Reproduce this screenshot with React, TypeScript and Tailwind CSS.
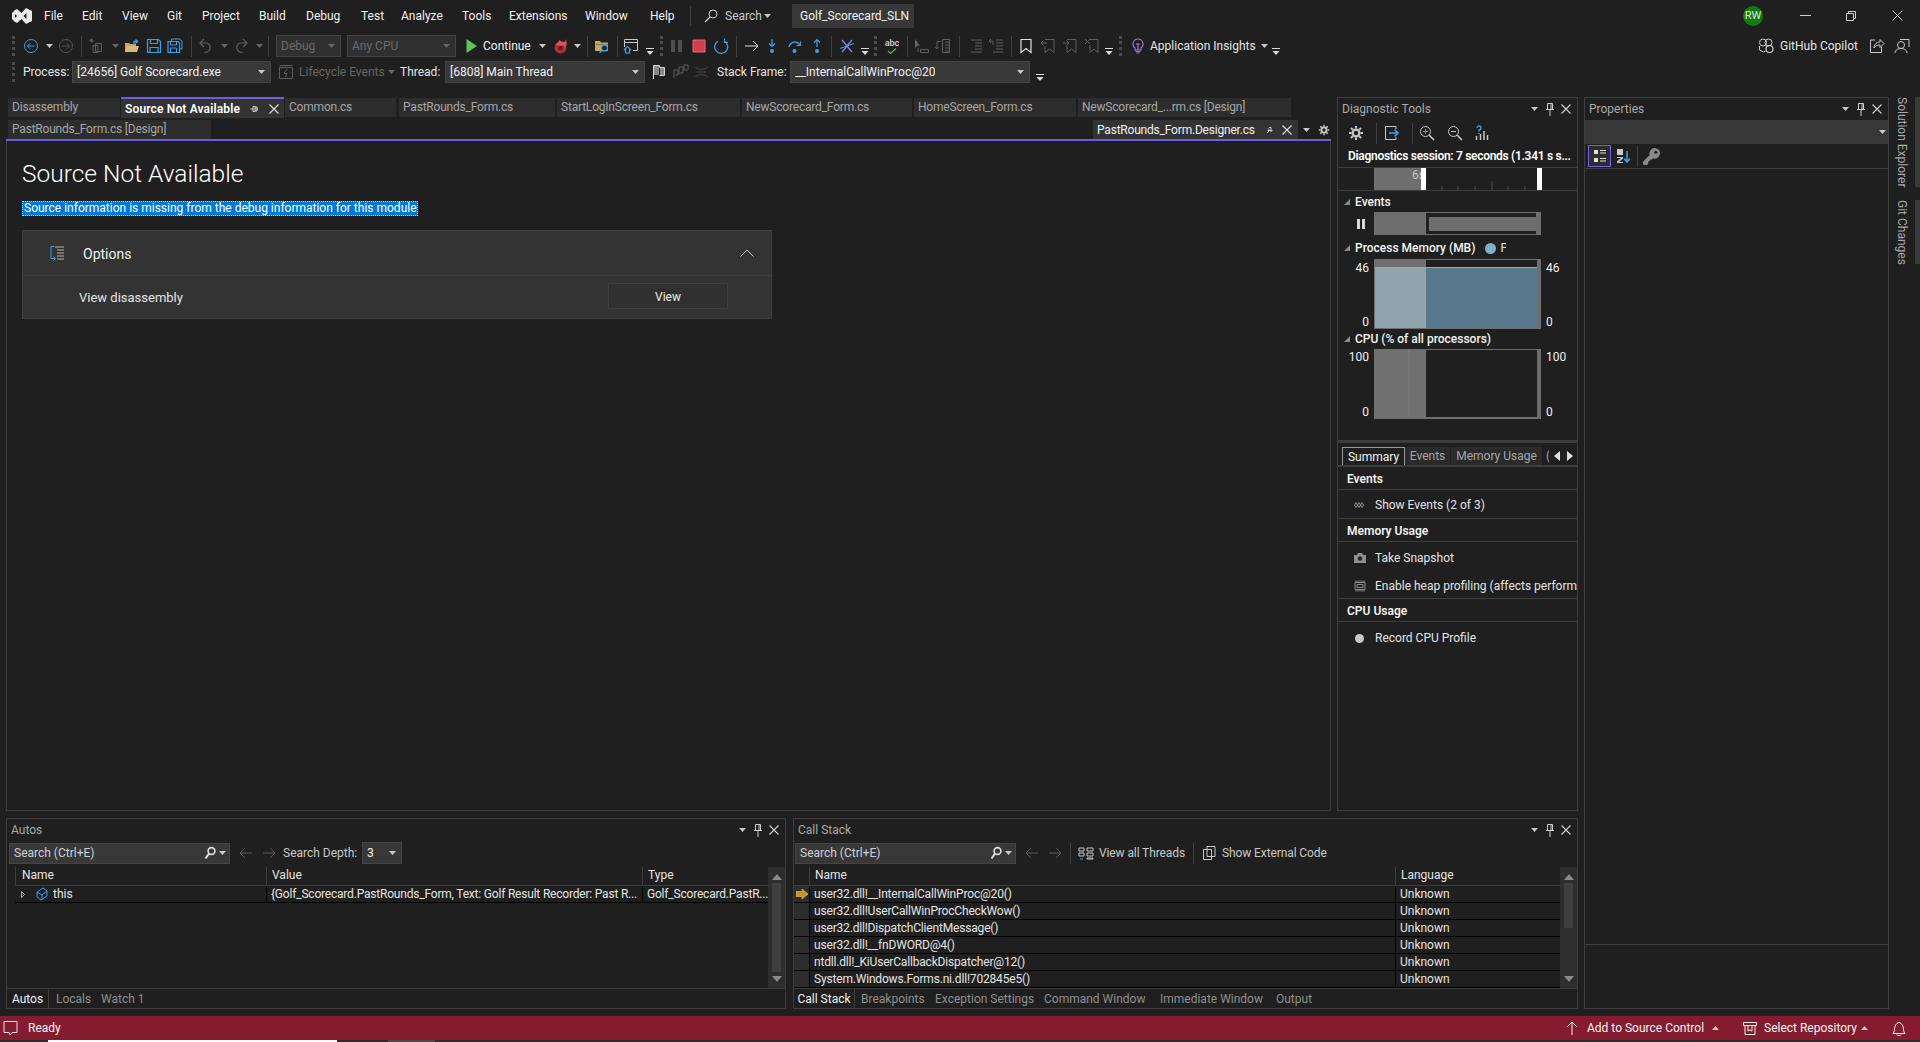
import type { ReactNode } from "react";

const BLUE = "#3f9ee8";
const DIM = "#5f5f5f";

function Ic({ children, className = "" }: { children: ReactNode; className?: string }) {
  return (
    <svg viewBox="0 0 16 16" fill="none" strokeWidth="1" className={`w-4 h-4 shrink-0 ${className}`}>
      {children}
    </svg>
  );
}

function Caret({ className = "", dim = false }: { className?: string; dim?: boolean }) {
  return (
    <svg viewBox="0 0 7 4" className={`w-[7px] h-[4px] shrink-0 ${className}`}>
      <path d="M0 0h7L3.5 4z" fill={dim ? "#666" : "#c8c8c8"} />
    </svg>
  );
}

function Customize({ className = "" }: { className?: string }) {
  return (
    <svg viewBox="0 0 8 8" className={`w-2 h-2 shrink-0 mt-[12px] ${className}`}>
      <path d="M0 .5h8" stroke="#dcdcdc" />
      <path d="M.5 3h7L4 7z" fill="#dcdcdc" />
    </svg>
  );
}

const Sep = ({ className = "" }: { className?: string }) => <div className={`w-px h-[21px] bg-[#3f3f3f] shrink-0 ${className}`} />;
const Grip = ({ className = "" }: { className?: string }) => (
  <div className={`w-0 h-[20px] border-l-[3px] border-dotted border-[#4c4c4c] shrink-0 ${className}`} />
);

function Combo({ label, className = "", disabled = false }: { label: string; className?: string; disabled?: boolean }) {
  return (
    <div
      className={`h-[22px] flex items-center justify-between pl-[4px] pr-[5px] border border-[#444] shrink-0 ${disabled ? "bg-[#303030] text-[#6a6a6a]" : "bg-[#383838] text-[#f1f1f1]"} ${className}`}
    >
      <span className="whitespace-nowrap overflow-hidden">{label}</span>
      <Caret dim={disabled} />
    </div>
  );
}

function PanelTitle({ title }: { title: string }) {
  return (
    <div className="h-[22px] flex items-center pl-[4px] pr-[6px] text-[#a9a9a9] shrink-0">
      <span className="flex-1">{title}</span>
      <Caret className="mr-[7px]" />
      <svg viewBox="0 0 10 14" className="w-[10px] h-[14px] mr-[6px]">
        <path d="M2.5 1.5h5v6h-5zM1 7.5h8M5 8v6" stroke="#d0d0d0" fill="none" />
        <path d="M6 2v5" stroke="#d0d0d0" />
      </svg>
      <svg viewBox="0 0 10 10" className="w-[10px] h-[10px]">
        <path d="M.5.5l9 9M9.5.5l-9 9" stroke="#d0d0d0" strokeWidth="1.1" />
      </svg>
    </div>
  );
}

function Tab({ label, className = "" }: { label: string; className?: string }) {
  return (
    <div className={`h-[19px] bg-[#2d2d2d] text-[#a6a6a6] flex items-center pl-[4px] pb-px tracking-[-0.2px] whitespace-nowrap overflow-hidden shrink-0 ${className}`}>
      {label}
    </div>
  );
}

function SearchBox({ className = "" }: { className?: string }) {
  return (
    <div className={`h-[21px] bg-[#383838] border border-[#444] flex items-center pl-[4px] pr-[3px] text-[#d0d0d0] shrink-0 ${className}`}>
      <span className="flex-1">Search (Ctrl+E)</span>
      <svg viewBox="0 0 12 14" className="w-3 h-[14px] mr-[3px]">
        <circle cx="7.5" cy="5" r="3.4" stroke="#e0e0e0" strokeWidth="1.6" fill="none" />
        <path d="M5 7.5L1.5 12.5" stroke="#e0e0e0" strokeWidth="2" />
      </svg>
      <Caret />
    </div>
  );
}

const ArrowBack = ({ className = "" }: { className?: string }) => (
  <Ic className={className}>
    <path d="M14 8H2M7 3L2 8l5 5" stroke="#5a5a5a" />
  </Ic>
);
const ArrowFwd = ({ className = "" }: { className?: string }) => (
  <Ic className={className}>
    <path d="M2 8h12M9 3l5 5-5 5" stroke="#5a5a5a" />
  </Ic>
);

function ScrollBar({ thumb }: { thumb: string }) {
  return (
    <div className="w-[17px] bg-[#2e2e2e] flex flex-col items-center shrink-0">
      <svg viewBox="0 0 10 6" className="w-[10px] h-[6px] mt-[7px] mb-[3px]">
        <path d="M5 0l5 6H0z" fill="#8a8a8a" />
      </svg>
      <div className={`w-[9px] bg-[#3f3f3f] ${thumb}`} />
      <div className="flex-1" />
      <svg viewBox="0 0 10 6" className="w-[10px] h-[6px] mb-[6px]">
        <path d="M0 0h10L5 6z" fill="#8a8a8a" />
      </svg>
    </div>
  );
}

const MENU = [
  ["File", "w-[38px]"],
  ["Edit", "w-[40px]"],
  ["View", "w-[45px]"],
  ["Git", "w-[35px]"],
  ["Project", "w-[57px]"],
  ["Build", "w-[47px]"],
  ["Debug", "w-[55px]"],
  ["Test", "w-[40px]"],
  ["Analyze", "w-[61px]"],
  ["Tools", "w-[47px]"],
  ["Extensions", "w-[76px]"],
  ["Window", "w-[65px]"],
  ["Help", "w-[40px]"],
];

function TitleBar() {
  return (
    <div className="h-[33px] flex items-center shrink-0 pb-[2px]">
      <svg viewBox="0 0 20 16" className="w-5 h-4 ml-[12px] mr-[12px] shrink-0">
        <path d="M14 0l6 3v10l-6 3-4.5-5L5 15l-2-1-3-3V5l3-3 2-1 4.5 4zM14.5 5l-3 3 3 3zM3 6v4l2-2z" fill="#e8e8e8" fillRule="evenodd" />
      </svg>
      {MENU.map(([label, w]) => (
        <div key={label} className={`${w} text-[#f1f1f1] shrink-0`}>
          {label}
        </div>
      ))}
      <div className="w-px h-[20px] bg-[#3f3f3f] shrink-0" />
      <Ic className="ml-[12px]">
        <circle cx="10" cy="6" r="4" stroke="#d0d0d0" />
        <path d="M7 9l-5 5" stroke="#d0d0d0" strokeWidth="1.2" />
      </Ic>
      <span className="ml-[6px] text-[#c8c8c8] w-[39px]">Search</span>
      <Caret className="ml-[0px]" />
      <div className="ml-[21px] w-[122px] h-[24px] bg-[#383838] flex items-center pl-[8px] text-[#f1f1f1] shrink-0">Golf_Scorecard_SLN</div>
      <div className="ml-auto w-5 h-5 rounded-full bg-[#107c10] text-[#e0e0e0] text-[11px] flex items-center justify-center">RW</div>
      <svg viewBox="0 0 11 1" className="w-[11px] h-px ml-[37px]">
        <path d="M0 .5h11" stroke="#d0d0d0" />
      </svg>
      <svg viewBox="0 0 10 10" className="w-[10px] h-[10px] ml-[35px]">
        <path d="M.5 2.5h7v7h-7zM2.5 2.5v-2h7v7h-2" stroke="#d0d0d0" fill="none" />
      </svg>
      <svg viewBox="0 0 11 11" className="w-[11px] h-[11px] ml-[36px] mr-[17px]">
        <path d="M.5.5l10 10M10.5.5l-10 10" stroke="#d0d0d0" />
      </svg>
    </div>
  );
}

function StandardBar() {
  return (
    <div className="h-[26px] flex items-center shrink-0">
      <Grip className="ml-[12px]" />
      <Ic className="ml-[8px]">
        <circle cx="8" cy="8" r="6.5" stroke={BLUE} />
        <path d="M11.5 8h-7M7.5 5l-3 3 3 3" stroke={BLUE} />
      </Ic>
      <Caret className="ml-[7px]" />
      <Ic className="ml-[5px]">
        <circle cx="8" cy="8" r="6.5" stroke="#555" />
        <path d="M4.5 8h7M8.5 5l3 3-3 3" stroke="#555" />
      </Ic>
      <Sep className="ml-[7px]" />
      <Ic className="ml-[7px]">
        <path d="M6.5 5.5h6v8h-6zM4 7.5h5v7H4z" stroke={DIM} />
        <path d="M1 1l3 3M4 1L1 4M2.5.5v4M.5 2.5h4" stroke={DIM} strokeWidth=".8" />
      </Ic>
      <Caret className="ml-[7px]" dim />
      <Ic className="ml-[5px]">
        <path d="M1 14V5h4l1 1h6v8z" fill="#c9a565" />
        <path d="M3 8h12l-2 6H1z" fill="#dcb67a" />
        <path d="M10 7V3.5h3M11.5 1.5l2 2-2 2" stroke={BLUE} strokeWidth="1.3" />
      </Ic>
      <Ic className="ml-[6px]">
        <path d="M1.5 1.5h11l2 2v11h-13z" stroke={BLUE} strokeWidth="1.2" />
        <path d="M4.5 1.5v4h7v-4M4 14.5v-5h8v5" stroke={BLUE} strokeWidth="1.2" />
      </Ic>
      <Ic className="ml-[5px]">
        <path d="M4.5 3V1h8l2.5 2v8h-2" stroke={BLUE} />
        <path d="M1 3.5h10l1.5 1.5v9.5H1z" stroke={BLUE} strokeWidth="1.2" />
        <path d="M3.5 4v3h6V4M3.5 14v-4h6v4" stroke={BLUE} />
      </Ic>
      <Sep className="ml-[8px]" />
      <Ic className="ml-[6px]">
        <path d="M6 1L2 5l4 4M2 5h7a4.5 4.5 0 1 1-3 9" stroke={DIM} strokeWidth="1.2" />
      </Ic>
      <Caret className="ml-[7px]" dim />
      <Ic className="ml-[5px]">
        <path d="M10 1l4 4-4 4M14 5H7a4.5 4.5 0 1 0 3 9" stroke={DIM} strokeWidth="1.2" />
      </Ic>
      <Caret className="ml-[7px]" dim />
      <Sep className="ml-[5px]" />
      <Combo label="Debug" className="ml-[7px] w-[65px]" disabled />
      <Combo label="Any CPU" className="ml-[6px] w-[109px]" disabled />
      <Ic className="ml-[7px]">
        <path d="M3.5 1l10.5 7-10.5 7z" fill="#5fc55b" />
      </Ic>
      <span className="ml-[4px] w-[51px] text-[#f1f1f1] shrink-0">Continue</span>
      <Caret className="ml-[5px]" />
      <Ic className="ml-[7px]">
        <circle cx="7.5" cy="9.5" r="6" fill="#a8323e" />
        <path d="M3 7c1-3 3-2 3-5 2 1 2 3 4 1 0 2 2 2 3-2 1 4 1 7-1 9-1-3-3-4-3-2-2-1-4 0-6-1z" fill="#e2505c" />
        <circle cx="7.5" cy="10" r="2.3" fill="#5c1a22" />
      </Ic>
      <Caret className="ml-[5px]" />
      <Sep className="ml-[6px]" />
      <Ic className="ml-[6px]">
        <path d="M1 13V3h5l1 1.5h7V13z" fill="#c9a565" />
        <path d="M2 6h12v1H2z" fill="#8a6f3e" />
        <circle cx="10.5" cy="10" r="3" fill="#1f1f1f" stroke={BLUE} strokeWidth="1.3" />
        <path d="M8.5 12l-3 3" stroke={BLUE} strokeWidth="1.5" />
      </Ic>
      <Sep className="ml-[7px]" />
      <Ic className="ml-[5px]">
        <path d="M1.5 9V1.5h13v11H10M1.5 4.5h13" stroke="#c8c8c8" />
        <path d="M1 12l3.5-3.5L8 12M2.5 11v4h4v-4" stroke={BLUE} strokeWidth="1.2" />
      </Ic>
      <Customize className="ml-[7px]" />
      <Grip className="ml-[6px]" />
      <Ic className="ml-[6px]">
        <path d="M2 2h4v12H2zM9 2h4v12H9z" fill="#4f4f4f" />
      </Ic>
      <Ic className="ml-[6px]">
        <path d="M2 2h12v12H2z" fill="#d43f4e" stroke="#e96a74" />
      </Ic>
      <Ic className="ml-[6px]">
        <path d="M5 3.2A6.5 6.5 0 1 0 11 3" stroke={BLUE} strokeWidth="1.3" />
        <path d="M11.5.5v3.8h3.5" stroke={BLUE} strokeWidth="1.2" />
      </Ic>
      <Sep className="ml-[7px]" />
      <Ic className="ml-[7px]">
        <path d="M1 8h13M9 3l5 5-5 5" stroke="#e0e0e0" />
      </Ic>
      <Ic className="ml-[4px]">
        <path d="M8 1v7M5 5.5L8 8.5l3-3" stroke={BLUE} strokeWidth="1.2" />
        <circle cx="8" cy="13" r="2" fill={BLUE} />
      </Ic>
      <Ic className="ml-[7px]">
        <path d="M2 9a6 6 0 0 1 11-2" stroke={BLUE} strokeWidth="1.3" />
        <path d="M13.5 3.5v4h-4" stroke={BLUE} strokeWidth="1.2" />
        <circle cx="7.5" cy="13" r="2" fill={BLUE} />
      </Ic>
      <Ic className="ml-[6px]">
        <path d="M8 9V2M5 4.5L8 1.5l3 3" stroke={BLUE} strokeWidth="1.2" />
        <circle cx="8" cy="13" r="2" fill={BLUE} />
      </Ic>
      <Sep className="ml-[6px]" />
      <Ic className="ml-[7px]">
        <path d="M3 14C6 11 10 5 13 2M3 2c3 3 7 9 10 12" stroke="#8c7be8" strokeWidth="1.4" />
        <path d="M1 10.5L15 5.5" stroke={BLUE} strokeWidth="1.1" />
      </Ic>
      <Customize className="ml-[6px]" />
      <Grip className="ml-[5px]" />
      <div className="ml-[7px] w-4 flex flex-col items-center shrink-0 leading-[9px] text-[9px] font-medium text-[#d8d8d8]">
        abc
        <svg viewBox="0 0 10 6" className="w-[10px] h-[6px]">
          <path d="M1 3l2.5 2.5L9 .5" stroke="#4fb34f" fill="none" strokeWidth="1.2" />
        </svg>
      </div>
      <Sep className="ml-[7px]" />
      <Ic className="ml-[6px]">
        <path d="M1 1v9l2.5-2.5L6 8z" fill="#666" />
        <path d="M6.5 11.5h8v3h-8zM4 10v4" stroke={DIM} />
      </Ic>
      <Ic className="ml-[5px]">
        <path d="M7.5 1.5h7v13h-7zM10 4h4M10 7h4M10 10h4M10 13h4" stroke={DIM} />
        <path d="M5.5 3.5H2v7M.5 9L2 11l1.5-2" stroke={DIM} />
      </Ic>
      <Sep className="ml-[8px]" />
      <Ic className="ml-[8px]">
        <path d="M3 2h11M7 5h7M7 8h7M7 11h7M3 14h11" stroke={DIM} />
      </Ic>
      <Ic className="ml-[4px]">
        <path d="M8 2h7M8 5h7M8 8h7M8 11h7M5 14h10M3 1L1 3l2 2M1 3h4v4" stroke={DIM} />
      </Ic>
      <Sep className="ml-[7px]" />
      <Ic className="ml-[6px]">
        <path d="M3 1.5h10v13L8 10.5l-5 4z" stroke="#e0e0e0" strokeWidth="1.2" />
      </Ic>
      <Ic className="ml-[6px]">
        <path d="M5 1.5h9v13L9.5 11 5 14.5V8M7 5H1M3.5 2.5L1 5l2.5 2.5" stroke={DIM} />
      </Ic>
      <Ic className="ml-[6px]">
        <path d="M5 1.5h9v13L9.5 11 5 14.5V8M1 5h6M4.5 2.5L7 5 4.5 7.5" stroke={DIM} />
      </Ic>
      <Ic className="ml-[6px]">
        <path d="M6 1.5h8v13L10 11l-4 3.5V7M1 1l5 5M6 1L1 6" stroke={DIM} />
      </Ic>
      <Customize className="ml-[5px]" />
      <Grip className="ml-[6px]" />
      <Ic className="ml-[8px]">
        <path d="M8 1a5 5 0 0 0-3 9v2h6v-2a5 5 0 0 0-3-9zM5.5 13.5h5M6.5 15h3M8 6v6M6 6h4" stroke="#9d7be0" strokeWidth="1.1" />
      </Ic>
      <span className="ml-[4px] w-[106px] text-[#e4e4e4] shrink-0 whitespace-nowrap">Application Insights</span>
      <Caret className="ml-[5px]" />
      <Customize className="ml-[4px]" />
      <Ic className="ml-auto">
        <circle cx="5" cy="4.5" r="3.5" stroke="#d0d0d0" />
        <circle cx="10.5" cy="4.5" r="3.5" stroke="#d0d0d0" />
        <path d="M1.5 8v4l4 2 2-1" stroke="#d0d0d0" />
        <circle cx="11.5" cy="11" r="3.5" stroke="#d0d0d0" strokeWidth="1.2" />
      </Ic>
      <span className="ml-[6px] w-[80px] text-[#e4e4e4] shrink-0 whitespace-nowrap">GitHub Copilot</span>
      <Ic className="ml-[9px]">
        <path d="M6 2H1.5v12.5h11V9M5 10c0-4 3-6 6-6V1.5L15 5.5l-4 4V7C8 7 6 8 5 10z" stroke="#c8c8c8" />
      </Ic>
      <Ic className="ml-[9px] mr-[10px]">
        <circle cx="7" cy="7" r="3.5" stroke="#c8c8c8" />
        <path d="M1 15c0-3 3-4.5 6-4.5s6 1.5 6 4.5M6 1.5h9V9" stroke="#c8c8c8" />
      </Ic>
    </div>
  );
}

function DebugBar() {
  return (
    <div className="h-[26px] flex items-center shrink-0">
      <Grip className="ml-[12px]" />
      <span className="ml-[8px] w-[49px] text-[#e4e4e4] shrink-0">Process:</span>
      <Combo label="[24656] Golf Scorecard.exe" className="w-[199px]" />
      <Ic className="ml-[7px]">
        <path d="M1.5 3.5h13v11h-13zM1.5 1.5h13" stroke={DIM} />
        <path d="M9 5L6 9.5h3L7.5 13" stroke={DIM} />
      </Ic>
      <span className="ml-[5px] w-[84px] text-[#666] shrink-0 whitespace-nowrap">Lifecycle Events</span>
      <Caret className="ml-[5px]" dim />
      <span className="ml-[5px] w-[45px] text-[#e4e4e4] shrink-0">Thread:</span>
      <Combo label="[6808] Main Thread" className="w-[200px]" />
      <Ic className="ml-[6px]">
        <path d="M2.5 15V1.5h6v2h5v8h-5" stroke="#d8d8d8" />
        <path d="M3 2h5v9H3zM9 4h4v7H9z" fill="#8a8a8a" />
      </Ic>
      <Ic className="ml-[6px]">
        <path d="M1 14V6h4v5H2M6 10V3h4v6H7M11 7V1h4v5h-3" stroke={DIM} />
      </Ic>
      <Ic className="ml-[4px]">
        <path d="M1 3c4 3 10 3 14 0M1 13c4-3 10-3 14 0M3 8h10" stroke="#454545" />
      </Ic>
      <span className="ml-[8px] w-[73px] text-[#e4e4e4] shrink-0 whitespace-nowrap">Stack Frame:</span>
      <Combo label="__InternalCallWinProc@20" className="w-[240px]" />
      <Customize className="ml-[6px]" />
    </div>
  );
}

function DocumentWell() {
  return (
    <div className="h-[714px] flex flex-col shrink-0 w-[1325px]">
      <div className="h-[21px] flex items-start pl-[2px] shrink-0 mb-[2px]">
        <Tab label="Disassembly" className="w-[112px] mt-px" />
        <div className="ml-px w-[163px] h-[21px] bg-[#333333] border-t-2 border-[#6d5de0] flex items-center pl-[4px] text-white font-semibold tracking-[0.15px] shrink-0">
          <span className="w-[124px] whitespace-nowrap">Source Not Available</span>
          <svg viewBox="0 0 8 8" className="w-2 h-2 ml-px">
            <path d="M.5 4H3M3 1.5h2v5H3zM5 4h3M5 2h2v4H5" stroke="#d0d0d0" fill="none" />
          </svg>
          <svg viewBox="0 0 10 10" className="w-[10px] h-[10px] ml-[11px]">
            <path d="M.5.5l9 9M9.5.5l-9 9" stroke="#e0e0e0" strokeWidth="1.1" />
          </svg>
        </div>
        <Tab label="Common.cs" className="w-[111px] ml-px mt-px" />
        <Tab label="PastRounds_Form.cs" className="w-[156px] ml-[3px] mt-px" />
        <Tab label="StartLogInScreen_Form.cs" className="w-[183px] ml-[2px] mt-px" />
        <Tab label="NewScorecard_Form.cs" className="w-[170px] ml-[2px] mt-px" />
        <Tab label="HomeScreen_Form.cs" className="w-[162px] ml-[2px] mt-px" />
        <Tab label="NewScorecard_...rm.cs [Design]" className="w-[213px] ml-[2px] mt-px" />
      </div>
      <div className="h-[19px] flex items-center pl-[2px] shrink-0">
        <Tab label="PastRounds_Form.cs [Design]" className="w-[203px]" />
        <div className="ml-[882px] w-[205px] h-[19px] bg-[#333333] text-[#f1f1f1] flex items-center pl-[4px] tracking-[-0.2px] shrink-0 whitespace-nowrap">
          <span className="w-[165px]">PastRounds_Form.Designer.cs</span>
          <svg viewBox="0 0 8 8" className="w-2 h-2 ml-[4px]">
            <path d="M1 7l2-2M2 2.5L5.5 6M3 1.5h2v3M1.5 4.5h5" stroke="#d0d0d0" fill="none" />
          </svg>
          <svg viewBox="0 0 10 10" className="w-[10px] h-[10px] ml-[8px]">
            <path d="M.5.5l9 9M9.5.5l-9 9" stroke="#e0e0e0" strokeWidth="1.1" />
          </svg>
        </div>
        <Caret className="ml-[5px]" />
        <Ic className="ml-[8px] w-[12px] h-[12px]">
          <circle cx="8" cy="8" r="3.4" stroke="#c8c8c8" strokeWidth="2.4" />
          <path d="M8 1v2.5M8 12.5V15M1 8h2.5M12.5 8H15M3 3l1.8 1.8M11.2 11.2L13 13M13 3l-1.8 1.8M4.8 11.2L3 13" stroke="#c8c8c8" strokeWidth="2" />
        </Ic>
      </div>
      <div className="h-[2px] bg-[#6d5de0] shrink-0" />
      <div className="flex-1 border-l border-r border-b border-[#3d3d3d] pl-[15px] pt-[17px]">
        <div className="text-[24.5px] leading-[32px] font-light text-white whitespace-nowrap">Source Not Available</div>
        <div className="mt-[11px] w-[396px] h-[15px] bg-[#0078d7] outline-1 -outline-offset-1 outline-dotted outline-[#a8d4f5] text-white leading-[15px] pl-[2px] whitespace-nowrap">
          Source information is missing from the debug information for this module
        </div>
        <div className="mt-[14px] w-[750px] h-[89px] bg-[#333333] border border-[#3f3f3f]">
          <div className="h-[45px] border-b border-[#3f3f3f] flex items-center">
            <Ic className="ml-[26px]">
              <path d="M5 1.5H2V13.5H6M4.5 11.5l2 2-2 2" stroke={BLUE} />
              <path d="M6 2h9M8 5h7M8 8h7M8 11h7M8 14h7" stroke="#b4b4b4" />
            </Ic>
            <span className="ml-[18px] mt-px text-[14px] text-[#f1f1f1] flex-1">Options</span>
            <svg viewBox="0 0 14 8" className="w-[14px] h-2 mr-[17px]">
              <path d="M.5 7.5L7 1l6.5 6.5" stroke="#c8c8c8" fill="none" />
            </svg>
          </div>
          <div className="flex items-center h-[42px] pl-[56px]">
            <span className="flex-1 mt-px text-[13px] text-[#e4e4e4]">View disassembly</span>
            <div className="w-[120px] h-[26px] border border-[#3f3f3f] bg-[#303030] flex items-center justify-center pt-px text-[#f1f1f1] mr-[43px] -mt-[2px]">View</div>
          </div>
        </div>
      </div>
    </div>
  );
}

function Ticks() {
  return (
    <svg viewBox="0 0 111 22" className="w-[111px] h-[22px] shrink-0">
      <path d="M16 18v4M32 18v4M49 18v4M66 13v9M82 18v4M99 18v4" stroke="#4c4c4c" />
    </svg>
  );
}

function SectionHead({ label }: { label: string }) {
  return (
    <div className="flex items-center h-full">
      <svg viewBox="0 0 8 8" className="w-2 h-2 ml-[5px] mr-[4px] shrink-0">
        <path d="M7 1v6H1z" fill="#8a8a8a" />
      </svg>
      <span className="text-[#f4f4f4] font-medium whitespace-nowrap">{label}</span>
    </div>
  );
}

function SummaryHead({ label, className = "" }: { label: string; className?: string }) {
  return <div className={`h-[23px] pl-[9px] pt-[1px] flex items-center font-semibold text-[#f1f1f1] border-b border-[#3d3d3d] ${className}`}>{label}</div>;
}

function SummaryItem({ label, icon, className = "" }: { label: string; icon: ReactNode; className?: string }) {
  return (
    <div className={`flex items-center whitespace-nowrap text-[#e4e4e4] pl-[16px] pt-px overflow-hidden ${className}`}>
      <span className="w-[21px] shrink-0 flex">{icon}</span>
      {label}
    </div>
  );
}

function DiagnosticTools() {
  return (
    <div className="w-[241px] h-[714px] border border-[#3d3d3d] flex flex-col overflow-hidden shrink-0">
      <PanelTitle title="Diagnostic Tools" />
      <div className="h-[26px] flex items-center shrink-0">
        <Ic className="ml-[10px]">
          <circle cx="8" cy="8" r="3.4" stroke="#c8c8c8" strokeWidth="2.4" />
          <path d="M8 1v2.5M8 12.5V15M1 8h2.5M12.5 8H15M3 3l1.8 1.8M11.2 11.2L13 13M13 3l-1.8 1.8M4.8 11.2L3 13" stroke="#c8c8c8" strokeWidth="2" />
        </Ic>
        <Sep className="ml-[12px]" />
        <Ic className="ml-[7px]">
          <path d="M12 4V1.5H1.5v13H12V12" stroke="#c8c8c8" />
          <path d="M5 8h9M10.5 4.5L14 8l-3.5 3.5" stroke={BLUE} strokeWidth="1.6" />
        </Ic>
        <Sep className="ml-[12px]" />
        <Ic className="ml-[6px]">
          <circle cx="6.5" cy="6.5" r="5" stroke="#c8c8c8" />
          <path d="M10 10l5 5" stroke="#c8c8c8" strokeWidth="1.6" />
          <path d="M4 6.5h5M6.5 4v5" stroke={BLUE} />
        </Ic>
        <Ic className="ml-[12px]">
          <circle cx="6.5" cy="6.5" r="5" stroke="#c8c8c8" />
          <path d="M10 10l5 5" stroke="#c8c8c8" strokeWidth="1.6" />
          <path d="M4 6.5h5" stroke="#c8c8c8" />
        </Ic>
        <Ic className="ml-[11px]">
          <path d="M3 3a2 2 0 1 1 2 2v1.5" stroke={BLUE} strokeWidth="1.3" />
          <circle cx="5" cy="8.5" r=".8" fill={BLUE} />
          <path d="M2.5 11v4M6.5 9v6M10 6v9M13.5 10v5" stroke="#c8c8c8" strokeWidth="1.5" />
        </Ic>
      </div>
      <div className="h-[22px] flex items-center pl-[10px] pb-[2px] font-semibold tracking-[-0.3px] text-white whitespace-nowrap border-b border-[#3d3d3d] shrink-0">
        Diagnostics session: 7 seconds (1.341 s s...
      </div>
      <div className="h-[23px] pl-[36px] flex border-b border-[#3d3d3d] shrink-0">
        <div className="w-[47px] bg-[#6e6e6e] text-[#c4c4c4] pl-[38px] overflow-hidden leading-[14px] whitespace-nowrap">6s</div>
        <div className="w-[5px] bg-white" />
        <Ticks />
        <div className="w-[5px] bg-white" />
      </div>
      <div className="h-[21px] shrink-0">
        <SectionHead label="Events" />
      </div>
      <div className="h-[23px] flex items-center shrink-0">
        <svg viewBox="0 0 8 10" className="w-2 h-[10px] ml-[19px] mr-[9px]">
          <path d="M0 0h3v10H0zM5 0h3v10H5z" fill="#d8d8d8" />
        </svg>
        <div className="w-[167px] h-[23px] border border-[#6e6e6e] flex items-center">
          <div className="w-[51px] h-full bg-[#6e6e6e]" />
          <div className="ml-[3px] w-[107px] h-[14px] bg-[#6e6e6e]" />
          <div className="ml-auto w-[4px] h-full bg-[#6e6e6e]" />
        </div>
      </div>
      <div className="h-[22px] mt-[2px] flex items-center shrink-0">
        <SectionHead label="Process Memory (MB)" />
        <div className="w-[11px] h-[11px] rounded-full bg-[#79b1cd] ml-[10px]" />
        <span className="ml-[4px] w-[6px] overflow-hidden text-[#e4e4e4]">P</span>
      </div>
      <div className="h-[70px] flex shrink-0">
        <div className="w-[31px] flex flex-col justify-between items-end pt-[2px] text-[#f1f1f1] leading-[14px]">
          <span>46</span>
          <span>0</span>
        </div>
        <svg viewBox="0 0 167 70" className="ml-[5px] w-[167px] h-[70px]">
          <rect width="52" height="8" fill="#707070" />
          <rect y="8" width="52" height="62" fill="#8fa4ad" />
          <rect x="52" y="8" width="115" height="62" fill="#58798c" />
          <path d="M0 8.5h167" stroke="#7fb0c8" />
          <rect x="163" width="4" height="70" fill="#6e6e6e" />
          <rect x=".5" y=".5" width="166" height="69" stroke="#6e6e6e" fill="none" />
        </svg>
        <div className="ml-[5px] flex flex-col justify-between pt-[2px] text-[#f1f1f1] leading-[14px]">
          <span>46</span>
          <span>0</span>
        </div>
      </div>
      <div className="h-[20px] shrink-0">
        <SectionHead label="CPU (% of all processors)" />
      </div>
      <div className="h-[70px] flex shrink-0">
        <div className="w-[31px] flex flex-col justify-between items-end pt-px text-[#f1f1f1] leading-[14px]">
          <span>100</span>
          <span>0</span>
        </div>
        <svg viewBox="0 0 167 70" className="ml-[5px] w-[167px] h-[70px]">
          <rect width="52" height="70" fill="#707070" />
          <path d="M35 0v70" stroke="#7c7c7c" />
          <path d="M0 68.5h163" stroke="#5d7582" />
          <rect x="163" width="4" height="70" fill="#6e6e6e" />
          <rect x=".5" y=".5" width="166" height="69" stroke="#6e6e6e" fill="none" />
        </svg>
        <div className="ml-[5px] flex flex-col justify-between pt-px text-[#f1f1f1] leading-[14px]">
          <span>100</span>
          <span>0</span>
        </div>
      </div>
      <div className="h-[24px] border-b-[3px] border-[#3d3d3d] shrink-0" />
      <div className="h-[24px] pl-[4px] pt-[4px] flex items-stretch border-b-2 border-[#3d3d3d] shrink-0">
        <div className="w-[63px] border border-b-0 border-[#9a9a9a] bg-[#1f1f1f] flex items-center justify-center text-[#f1f1f1]">Summary</div>
        <div className="w-[46px] bg-[#2a2a2a] flex items-center justify-center text-[#a6a6a6] border-r border-[#1f1f1f]">Events</div>
        <div className="w-[91px] bg-[#2a2a2a] flex items-center justify-center text-[#a6a6a6] whitespace-nowrap">Memory Usage</div>
        <span className="ml-[4px] w-[3px] overflow-hidden text-[#a6a6a6] self-center">(</span>
        <svg viewBox="0 0 6 10" className="w-[6px] h-[10px] self-center ml-[5px]">
          <path d="M6 0v10L0 5z" fill="#e0e0e0" />
        </svg>
        <svg viewBox="0 0 6 10" className="w-[6px] h-[10px] self-center ml-[7px]">
          <path d="M0 0v10l6-5z" fill="#e0e0e0" />
        </svg>
      </div>
      <SummaryHead label="Events" />
      <SummaryItem
        label="Show Events (2 of 3)"
        className="h-[29px] border-b border-[#3d3d3d]"
        icon={
          <svg viewBox="0 0 10 6" className="w-[10px] h-[6px]">
            <path d="M2 .5L.5 3 2 5.5 3.5 3zM5 .5L3.5 3 5 5.5 6.5 3zM8 .5L6.5 3 8 5.5 9.5 3z" stroke="#a8a8a8" fill="none" strokeWidth=".8" />
          </svg>
        }
      />
      <SummaryHead label="Memory Usage" />
      <SummaryItem
        label="Take Snapshot"
        className="h-[31px]"
        icon={
          <svg viewBox="0 0 12 10" className="w-3 h-[10px]">
            <path d="M0 2h3l1-2h4l1 2h3v8H0z" fill="#8f8f8f" />
            <circle cx="6" cy="5.5" r="2.3" fill="#2a2a2a" />
          </svg>
        }
      />
      <SummaryItem
        label="Enable heap profiling (affects performance)"
        className="h-[26px] border-b border-[#3d3d3d]"
        icon={
          <svg viewBox="0 0 12 12" className="w-3 h-3">
            <path d="M1 2.5h10v7H1zM3 4.5h6v3H3zM2 .5v2M4 .5v2M6 .5v2M8 .5v2M10 .5v2M2 9.5v2M4 9.5v2M6 9.5v2M8 9.5v2M10 9.5v2" stroke="#8f8f8f" fill="none" />
          </svg>
        }
      />
      <SummaryHead label="CPU Usage" />
      <SummaryItem
        label="Record CPU Profile"
        className="h-[31px]"
        icon={<div className="w-[9px] h-[9px] ml-[1px] rounded-full bg-[#c8c8c8]" />}
      />
    </div>
  );
}

function Properties() {
  return (
    <div className="w-[305px] h-[912px] border border-[#3d3d3d] flex flex-col shrink-0">
      <PanelTitle title="Properties" />
      <div className="h-[24px] bg-[#383838] flex items-center justify-end pr-[2px] shrink-0">
        <Caret />
      </div>
      <div className="h-[25px] flex items-center border-b border-[#3d3d3d] shrink-0">
        <div className="ml-[3px] w-[23px] h-[22px] border border-[#7160e8] bg-[#2d2d2d] flex items-center justify-center">
          <Ic>
            <path d="M2 2h4v4H2zM2 10h4v4H2z" fill="#e0e0e0" />
            <path d="M8 2.5h6M8 5h6M8 10.5h6M8 13h6M3 4h2M3 12h2M4 11v2" stroke="#e0e0e0" />
          </Ic>
        </div>
        <Ic className="ml-[4px]">
          <path d="M2 1h6v6H2z" fill="#c8c8c8" />
          <path d="M2 9h6v1.5L4 14h4v1H2v-1.5L6 10H2z" fill="#c8c8c8" />
          <path d="M12 3v11M9 10.5l3 3.5 3-3.5" stroke={BLUE} strokeWidth="1.5" />
        </Ic>
        <Sep className="ml-[6px]" />
        <svg viewBox="0 0 16 16" className="w-[17px] h-[17px] ml-[5px] shrink-0">
          <path d="M11 0a5 5 0 0 1 5 5 5 5 0 0 1-5 5 5 5 0 0 1-1.6-.3L8 11H6.500v1.500H5V14l-1 2H1l-1-1v-2l6.300-6.400A5 5 0 0 1 11 0z" fill="#8a8a8a" />
          <circle cx="12" cy="4" r="1.500" fill="#1f1f1f" />
        </svg>
      </div>
      <div className="flex-1 border-b border-[#3d3d3d]" />
      <div className="h-[63px] shrink-0" />
    </div>
  );
}

function Rail() {
  return (
    <div className="w-[31px] h-[912px] shrink-0 flex flex-col text-[#a9a9a9]">
      <div className="h-[90px] flex justify-between">
        <span className="[writing-mode:vertical-rl] ml-[5px] whitespace-nowrap leading-[16px]">Solution Explorer</span>
        <div className="w-[5px] bg-[#3a3a3a]" />
      </div>
      <div className="h-[64px] mt-[13px] flex justify-between">
        <span className="[writing-mode:vertical-rl] ml-[5px] whitespace-nowrap leading-[16px]">Git Changes</span>
        <div className="w-[5px] bg-[#3a3a3a]" />
      </div>
    </div>
  );
}

function BottomTabs({ items, active }: { items: [string, string][]; active: string }) {
  return (
    <div className="h-[20px] flex items-stretch shrink-0 text-[#8f8f8f] border-t border-[#3d3d3d]">
      <div className={`${active} flex items-center justify-center text-[#f1f1f1] border-r border-[#3d3d3d]`}>{items[0][0]}</div>
      {items.slice(1).map(([label, cls]) => (
        <div key={label} className={`${cls} flex items-center whitespace-nowrap`}>
          {label}
        </div>
      ))}
    </div>
  );
}

function Autos() {
  return (
    <div className="w-[780px] h-[191px] border border-[#3d3d3d] flex flex-col shrink-0">
      <PanelTitle title="Autos" />
      <div className="h-[26px] pb-[2px] flex items-center shrink-0">
        <SearchBox className="ml-[2px] w-[221px]" />
        <ArrowBack className="ml-[8px]" />
        <ArrowFwd className="ml-[7px]" />
        <span className="ml-[6px] w-[79px] text-[#c8c8c8] shrink-0 whitespace-nowrap">Search Depth:</span>
        <Combo label="3" className="w-[40px] bg-[#383838]" />
      </div>
      <div className="flex-1 flex min-h-0">
        <div className="flex-1 flex flex-col pl-[8px] min-w-0">
          <div className="h-[19px] flex border-b border-[#3d3d3d] text-[#e4e4e4] shrink-0">
            <div className="w-[251px] pl-[6px] border-l border-[#3d3d3d]">Name</div>
            <div className="w-[376px] pl-[5px] border-l border-[#3d3d3d]">Value</div>
            <div className="flex-1 pl-[5px] border-l border-[#3d3d3d]">Type</div>
          </div>
          <div className="h-[17px] flex border-b border-black text-[#e4e4e4] shrink-0 whitespace-nowrap">
            <div className="w-[251px] flex items-center pl-[6px]">
              <svg viewBox="0 0 4 7" className="w-1 h-[7px] shrink-0">
                <path d="M.5.5l3 3-3 3z" stroke="#b0b0b0" fill="none" />
              </svg>
              <Ic className="ml-[9px]">
                <path d="M3 6l6-4 4 3v5l-6 4-4-3zM3 6l5 3 5-4M8 9v5" stroke={BLUE} />
              </Ic>
              <span className="ml-[3px]">this</span>
            </div>
            <div className="w-[376px] pl-[4px] border-l border-black overflow-hidden tracking-[-0.2px]">{"{Golf_Scorecard.PastRounds_Form, Text: Golf Result Recorder: Past R..."}</div>
            <div className="flex-1 pl-[4px] border-l border-black overflow-hidden tracking-[-0.2px]">Golf_Scorecard.PastR...</div>
          </div>
        </div>
        <ScrollBar thumb="h-[89px]" />
      </div>
      <BottomTabs
        active="w-[42px]"
        items={[
          ["Autos", ""],
          ["Locals", "ml-[7px] w-[45px]"],
          ["Watch 1", "w-[50px]"],
        ]}
      />
    </div>
  );
}

const FRAMES = [
  "user32.dll!__InternalCallWinProc@20()",
  "user32.dll!UserCallWinProcCheckWow()",
  "user32.dll!DispatchClientMessage()",
  "user32.dll!__fnDWORD@4()",
  "ntdll.dll!_KiUserCallbackDispatcher@12()",
  "System.Windows.Forms.ni.dll!702845e5()",
];

function CallStack() {
  return (
    <div className="w-[785px] h-[191px] border border-[#3d3d3d] flex flex-col shrink-0">
      <PanelTitle title="Call Stack" />
      <div className="h-[26px] pb-[2px] flex items-center shrink-0 text-[#c8c8c8]">
        <SearchBox className="ml-[1px] w-[221px]" />
        <ArrowBack className="ml-[8px]" />
        <ArrowFwd className="ml-[7px]" />
        <Sep className="ml-[7px]" />
        <Ic className="ml-[7px]">
          <path d="M1 3h5v3H1zM9 3h6v3H9zM9 8h6v3H9zM9 13h6v1H9zM1 8h5v3H1z" stroke="#c8c8c8" />
          <path d="M2 14h3" stroke={BLUE} />
        </Ic>
        <span className="ml-[5px] w-[83px] shrink-0 whitespace-nowrap tracking-[-0.1px]">View all Threads</span>
        <Sep className="ml-[11px]" />
        <Ic className="ml-[7px]">
          <path d="M6 1.5h8v10H6zM2.5 4.5h8v10h-8z" stroke="#c8c8c8" />
        </Ic>
        <span className="ml-[5px] w-[105px] shrink-0 whitespace-nowrap tracking-[-0.1px]">Show External Code</span>
      </div>
      <div className="flex-1 flex min-h-0">
        <div className="flex-1 flex flex-col min-w-0">
          <div className="h-[19px] flex border-b border-[#3d3d3d] text-[#e4e4e4] shrink-0">
            <div className="w-[15px]" />
            <div className="w-[586px] pl-[5px] border-l border-[#3d3d3d]">Name</div>
            <div className="flex-1 pl-[5px] border-l border-[#3d3d3d]">Language</div>
          </div>
          {FRAMES.map((f, i) => (
            <div key={f} className="h-[17px] flex border-b border-black text-[#e4e4e4] shrink-0 whitespace-nowrap">
              <div className="w-[15px] bg-[#2d2d2d] flex items-center justify-center">
                {i === 0 && (
                  <svg viewBox="0 0 12 10" className="w-3 h-[10px]">
                    <path d="M0 2.5h6V0l6 5-6 5V7.5H0z" fill="#c4922b" stroke="#e8c26a" strokeWidth=".6" />
                  </svg>
                )}
              </div>
              <div className="w-[586px] pl-[4px] border-l border-black tracking-[-0.18px]">{f}</div>
              <div className="flex-1 pl-[4px] border-l border-black">Unknown</div>
            </div>
          ))}
        </div>
        <ScrollBar thumb="h-[45px]" />
      </div>
      <BottomTabs
        active="w-[61px]"
        items={[
          ["Call Stack", ""],
          ["Breakpoints", "ml-[6px] w-[74px]"],
          ["Exception Settings", "w-[109px]"],
          ["Command Window", "w-[116px]"],
          ["Immediate Window", "w-[116px]"],
          ["Output", "w-[50px]"],
        ]}
      />
    </div>
  );
}

function StatusBar() {
  return (
    <div className="h-[24px] bg-[#851b2f] flex items-center text-[#f4f4f4] shrink-0">
      <svg viewBox="0 0 16 17" className="w-4 h-[17px] ml-[3px]">
        <path d="M1 1.5h13v11H9L7 15l-1-2.5H1z" stroke="#f0e4e6" fill="none" />
      </svg>
      <span className="ml-[9px]">Ready</span>
      <svg viewBox="0 0 12 14" className="w-3 h-[14px] ml-auto">
        <path d="M6 14V1M1 6l5-5 5 5" stroke="#f4f4f4" fill="none" />
      </svg>
      <span className="ml-[9px] w-[118px] whitespace-nowrap">Add to Source Control</span>
      <Caret className="ml-[7px] rotate-180" />
      <svg viewBox="0 0 14 14" className="w-[14px] h-[14px] ml-[24px]">
        <path d="M.5 1.5h13v3H.5zM2 4.500v9h10v-9M5 5v5l2-1 2 1V5" stroke="#f4f4f4" fill="none" />
      </svg>
      <span className="ml-[7px] w-[90px] whitespace-nowrap">Select Repository</span>
      <Caret className="ml-[7px] rotate-180" />
      <svg viewBox="0 0 14 15" className="w-[14px] h-[15px] ml-[24px] mr-[14px]">
        <path d="M1 12.5c2-2 1-4 2-7s3-4 4-4 3 1 4 4 0 5 2 7zM5 13.5c0 1.5 4 1.5 4 0" stroke="#f4f4f4" fill="none" />
      </svg>
    </div>
  );
}

export default function App() {
  return (
    <div className="w-[1920px] h-[1042px] flex flex-col bg-[#1f1f1f] text-[12px] leading-[16px] text-[#dcdcdc] overflow-hidden [font-family:Roboto,sans-serif]">
      <TitleBar />
      <StandardBar />
      <DebugBar />
      <div className="h-[12px] shrink-0" />
      <div className="flex-1 flex pl-[6px] min-h-0">
        <div className="w-[1572px] flex flex-col shrink-0">
          <div className="flex justify-between">
            <DocumentWell />
            <DiagnosticTools />
          </div>
          <div className="flex justify-between mt-[7px]">
            <Autos />
            <CallStack />
          </div>
        </div>
        <div className="ml-[6px]">
          <Properties />
        </div>
        <Rail />
      </div>
      <StatusBar />
      <div className="h-[2px] flex bg-[#2b2b2b] shrink-0">
        <div className="ml-[48px] w-[289px] bg-white" />
        <div className="ml-[51px] w-[47px] bg-[#4a4a4a]" />
      </div>
    </div>
  );
}
